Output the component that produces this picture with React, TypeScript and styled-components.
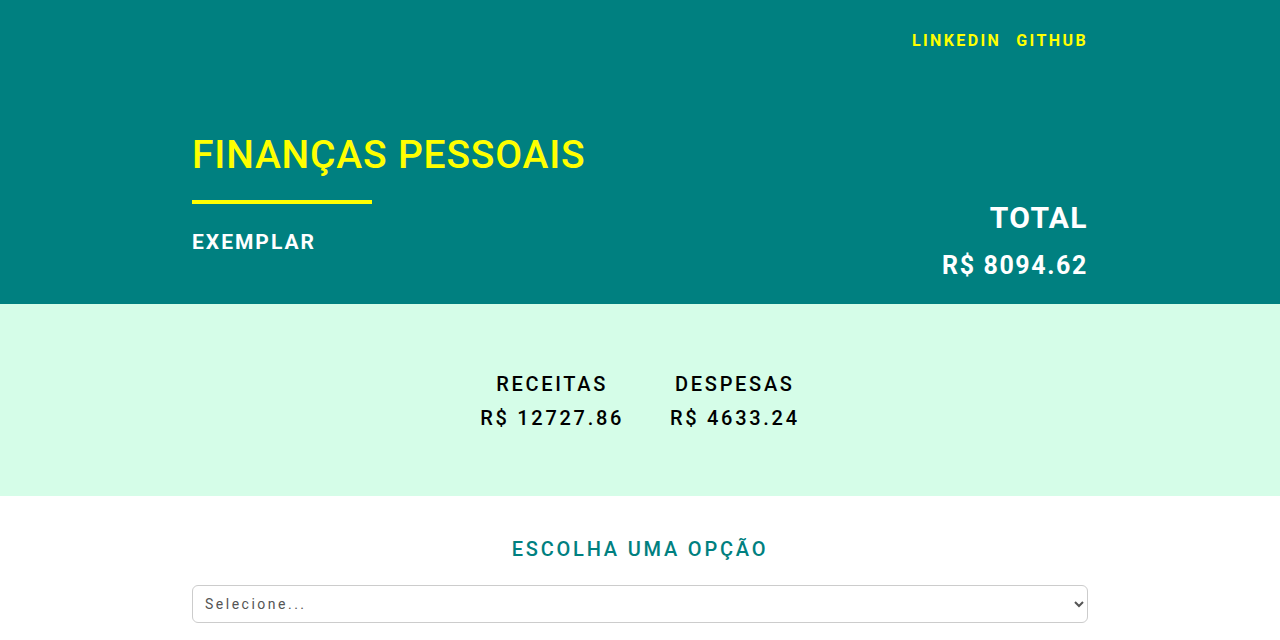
import React from 'react';
import styled, { createGlobalStyle } from 'styled-components';

const GlobalStyle = createGlobalStyle`
  body {
    margin: 0;
    font-family: Roboto, 'Noto Sans', sans-serif;
    background: #ffffff;
  }
`;

const Header = styled.header`
  background-color: #008080;
  height: 304px;
  box-sizing: border-box;
`;

const Container = styled.div`
  width: 896px;
  margin: 0 auto;
`;

const Nav = styled.nav`
  display: flex;
  justify-content: flex-end;
  gap: 15px;
  padding-top: 31px;
`;

const NavLink = styled.a`
  color: #ffff00;
  font-size: 16px;
  font-weight: 700;
  letter-spacing: 2.4px;
  text-decoration: none;
  line-height: 19px;
`;

const HeaderRow = styled.div`
  display: flex;
  justify-content: space-between;
  align-items: flex-end;
  margin-top: 82px;
`;

const TitleBlock = styled.div`
  display: flex;
  flex-direction: column;
`;

const Title = styled.h1`
  margin: 0;
  color: #ffff00;
  font-size: 39px;
  font-weight: 500;
  letter-spacing: 0.8px;
  line-height: 46px;
`;

const Underline = styled.div`
  width: 180px;
  height: 4px;
  background: #ffff00;
  margin-top: 22px;
`;

const Subtitle = styled.h2`
  margin: 25px 0 0;
  color: #ffffff;
  font-size: 21px;
  font-weight: 700;
  letter-spacing: 2px;
  line-height: 26px;
`;

const TotalBlock = styled.div`
  text-align: right;
  color: #ffffff;
  margin-bottom: -26px;
`;

const TotalLabel = styled.div`
  font-size: 30px;
  font-weight: 700;
  letter-spacing: 1.4px;
  line-height: 36px;
`;

const TotalValue = styled.div`
  font-size: 25px;
  font-weight: 700;
  letter-spacing: 1.6px;
  line-height: 30px;
  margin-top: 15px;
`;

const Summary = styled.section`
  background-color: #d5fde8;
  height: 192px;
  display: flex;
  justify-content: center;
  align-items: center;
  gap: 46px;
`;

const SummaryItem = styled.div`
  display: flex;
  flex-direction: column;
  align-items: center;
  color: #000000;
  gap: 11px;
  padding-top: 2px;
`;

const SummaryText = styled.div`
  font-size: 20px;
  font-weight: 500;
  letter-spacing: 2.7px;
  line-height: 23px;
`;

const OptionSection = styled.section`
  padding-top: 39px;
`;

const OptionTitle = styled.h3`
  margin: 0;
  text-align: center;
  color: #008080;
  font-size: 20px;
  font-weight: 500;
  letter-spacing: 2.8px;
  line-height: 28px;
`;

const Select = styled.select`
  display: block;
  width: 100%;
  height: 38px;
  margin-top: 22px;
  padding: 0 8px;
  border: 1px solid #cccccc;
  border-radius: 6px;
  background: #ffffff;
  color: #555555;
  font-family: Roboto, sans-serif;
  font-size: 14px;
  letter-spacing: 2.5px;
`;

export default function App() {
  return (
    <>
      <GlobalStyle />
      <Header>
        <Container>
          <Nav>
            <NavLink href="#">LINKEDIN</NavLink>
            <NavLink href="#">GITHUB</NavLink>
          </Nav>
          <HeaderRow>
            <TitleBlock>
              <Title>FINANÇAS PESSOAIS</Title>
              <Underline />
              <Subtitle>EXEMPLAR</Subtitle>
            </TitleBlock>
            <TotalBlock>
              <TotalLabel>TOTAL</TotalLabel>
              <TotalValue>R$ 8094.62</TotalValue>
            </TotalBlock>
          </HeaderRow>
        </Container>
      </Header>
      <Summary>
        <SummaryItem>
          <SummaryText>RECEITAS</SummaryText>
          <SummaryText>R$ 12727.86</SummaryText>
        </SummaryItem>
        <SummaryItem>
          <SummaryText>DESPESAS</SummaryText>
          <SummaryText>R$ 4633.24</SummaryText>
        </SummaryItem>
      </Summary>
      <OptionSection>
        <Container>
          <OptionTitle>ESCOLHA UMA OPÇÃO</OptionTitle>
          <Select defaultValue="">
            <option value="">Selecione...</option>
            <option value="receita">Receita</option>
            <option value="despesa">Despesa</option>
          </Select>
        </Container>
      </OptionSection>
    </>
  );
}
